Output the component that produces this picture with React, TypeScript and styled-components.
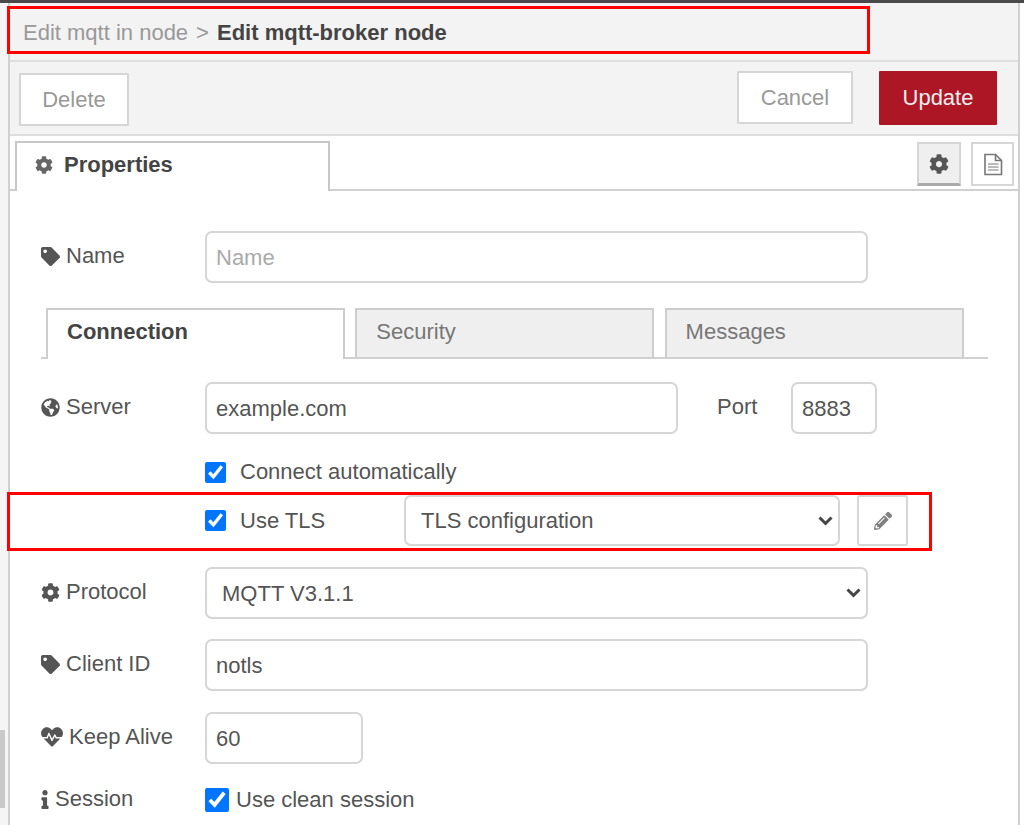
import React, { FC, ReactNode } from "react";
import styled, { createGlobalStyle } from "styled-components";
import { FaCog, FaTag, FaGlobeAmericas, FaHeartbeat, FaInfo, FaPencilAlt } from "react-icons/fa";

const GlobalStyle = createGlobalStyle`
  html, body {
    margin: 0;
    padding: 0;
    background: #fff;
  }
  * {
    box-sizing: border-box;
  }
  body, input, select, button {
    font-family: "Liberation Sans", Arial, sans-serif;
    font-size: 22px;
    color: #555;
  }
`;

const Field: FC<{ icon?: ReactNode; label?: string; children: ReactNode; $top: number }> = ({ icon, label, children, $top }) => (
  <Row $top={$top}>
    <RowLabel>
      {icon}
      {label}
    </RowLabel>
    {children}
  </Row>
);

const Chevron: FC = () => (
  <ArrowIcon viewBox="0 0 15 10">
    <path d="M1.5 1.5 L7.5 7.5 L13.5 1.5" />
  </ArrowIcon>
);

const FileIcon: FC = () => (
  <svg width="20" height="23" viewBox="0 0 20 23" fill="none" stroke="#777" strokeWidth="1.6">
    <path d="M2 1.5 H12.5 L18.5 7.5 V21.5 H2 Z" />
    <path d="M12.5 1.5 V7.5 H18.5" />
    <path d="M5 11 H15.5 M5 14 H15.5 M5 17 H15.5" strokeWidth="1.2" />
  </svg>
);

const App: FC = () => {
  return (
    <Page>
      <GlobalStyle />
      <TopLine />
      <Body>
        <Gutter>
          <GutterThumb />
        </Gutter>
        <Panel>
          <Header>
            <Crumb>Edit mqtt in node</Crumb>
            <CrumbSep>&gt;</CrumbSep>
            <CrumbCurrent>Edit mqtt-broker node</CrumbCurrent>
          </Header>
          <Toolbar>
            <DeleteButton>Delete</DeleteButton>
            <ToolbarRight>
              <CancelButton>Cancel</CancelButton>
              <UpdateButton>Update</UpdateButton>
            </ToolbarRight>
          </Toolbar>
          <TabBar>
            <MainTab>
              <FaCog size={18} color="#666" />
              Properties
            </MainTab>
            <SideButtons>
              <GearButton>
                <FaCog size={20} color="#555" />
              </GearButton>
              <DocButton>
                <FileIcon />
              </DocButton>
            </SideButtons>
          </TabBar>
          <Form>
            <Field $top={40} icon={<FaTag size={19} />} label="Name">
              <TextInput $width={663} placeholder="Name" />
            </Field>
            <SubTabs>
              <SubTab $active>Connection</SubTab>
              <SubTab>Security</SubTab>
              <SubTab>Messages</SubTab>
            </SubTabs>
            <Field $top={23} icon={<FaGlobeAmericas size={19} />} label="Server">
              <TextInput $width={473} defaultValue="example.com" />
              <PortLabel>Port</PortLabel>
              <TextInput $width={86} defaultValue="8883" />
            </Field>
            <CheckRow $top={25}>
              <CheckLine>
                <Check defaultChecked />
                Connect automatically
              </CheckLine>
            </CheckRow>
            <CheckRow $top={10}>
              <TlsCheck>
                <Check defaultChecked />
                Use TLS
              </TlsCheck>
              <SelectWrap $width={436}>
                <Select $height={51} defaultValue="tls">
                  <option value="tls">TLS configuration</option>
                </Select>
                <Chevron />
              </SelectWrap>
              <EditButton>
                <FaPencilAlt size={18} color="#808080" />
              </EditButton>
            </CheckRow>
            <Field $top={21} icon={<FaCog size={19} />} label="Protocol">
              <SelectWrap $width={663}>
                <Select $height={52} defaultValue="v311">
                  <option value="v311">MQTT V3.1.1</option>
                </Select>
                <Chevron />
              </SelectWrap>
            </Field>
            <Field $top={20} icon={<FaTag size={19} />} label="Client ID">
              <TextInput $width={663} defaultValue="notls" />
            </Field>
            <Field $top={21} icon={<FaHeartbeat size={22} />} label="Keep Alive">
              <TextInput $width={158} defaultValue="60" />
            </Field>
            <Field $top={22} icon={<InfoIcon />} label="Session">
              <SessionLine>
                <SessionCheck defaultChecked />
                Use clean session
              </SessionLine>
            </Field>
          </Form>
        </Panel>
      </Body>
      <HeaderHighlight />
      <TlsHighlight />
    </Page>
  );
};

export default App;

const Page = styled.div`
  position: relative;
  width: 1024px;
  height: 825px;
  overflow: hidden;
  display: flex;
  flex-direction: column;
  background: #fff;
`;

const TopLine = styled.div`
  height: 3px;
  flex: none;
  background: #4a4a4a;
`;

const Body = styled.div`
  flex: 1;
  display: flex;
  min-height: 0;
`;

const Gutter = styled.div`
  width: 8px;
  flex: none;
  background: #f5f5f5;
  padding-top: 727px;
`;

const GutterThumb = styled.div`
  width: 5px;
  height: 78px;
  background: #c9c9c9;
`;

const Panel = styled.div`
  width: 1012px;
  flex: none;
  display: flex;
  flex-direction: column;
  border-left: 2px solid #d0d0d0;
  border-right: 2px solid #d0d0d0;
`;

const Header = styled.div`
  height: 59px;
  flex: none;
  display: flex;
  align-items: center;
  padding: 2px 0 0 13px;
  background: #f3f3f3;
  border-bottom: 2px solid #dedede;
`;

const Crumb = styled.span`
  color: #999;
`;

const CrumbSep = styled.span`
  color: #999;
  margin: 0 8px;
`;

const CrumbCurrent = styled.span`
  color: #444;
  font-weight: bold;
`;

const Toolbar = styled.div`
  height: 74px;
  flex: none;
  display: flex;
  justify-content: space-between;
  align-items: flex-start;
  padding: 9px 21px 0 9px;
  background: #f3f3f3;
  border-bottom: 2px solid #dedede;
`;

const ToolbarRight = styled.div`
  display: flex;
  gap: 26px;
`;

const ActionButton = styled.button`
  height: 53px;
  padding: 0;
  background: #fff;
  color: #999;
  border: 2px solid #d6d6d6;
  border-radius: 1px;
`;

const DeleteButton = styled(ActionButton)`
  width: 110px;
  margin-top: 2px;
`;

const CancelButton = styled(ActionButton)`
  width: 116px;
`;

const UpdateButton = styled(ActionButton)`
  width: 118px;
  height: 54px;
  background: #ad1625;
  color: #eee;
  border: none;
`;

const TabBar = styled.div`
  height: 55px;
  flex: none;
  display: flex;
  justify-content: space-between;
  align-items: flex-start;
  padding: 5px 4px 0 5px;
  border-bottom: 2px solid #d0d0d0;
`;

const MainTab = styled.div`
  width: 315px;
  height: 50px;
  display: flex;
  align-items: center;
  gap: 11px;
  padding: 0 0 4px 18px;
  background: #fff;
  color: #444;
  font-weight: bold;
  border: 2px solid #c8c8c8;
  border-bottom: none;
`;

const SideButtons = styled.div`
  display: flex;
  gap: 10px;
  padding-top: 1px;
`;

const GearButton = styled.div`
  width: 44px;
  height: 44px;
  display: flex;
  align-items: center;
  justify-content: center;
  background: #efefef;
  border: 2px solid #d6d6d6;
  border-bottom: 3px solid #aaa;
`;

const DocButton = styled.div`
  width: 43px;
  height: 44px;
  display: flex;
  align-items: center;
  justify-content: center;
  background: #fff;
  border: 2px solid #d6d6d6;
`;

const Form = styled.div`
  display: flex;
  flex-direction: column;
  padding-left: 31px;
`;

const Row = styled.div<{ $top: number }>`
  display: flex;
  align-items: center;
  margin-top: ${(p) => p.$top}px;
`;

const CheckRow = styled(Row)`
  padding-left: 164px;
`;

const RowLabel = styled.div`
  width: 164px;
  flex: none;
  display: flex;
  align-items: center;
  gap: 6px;
  color: #555;
  padding-bottom: 2px;

  svg {
    flex: none;
    color: #555;
  }
`;

const InfoIcon = styled(FaInfo)`
  width: 8px;
  height: 19px;
`;

const TextInput = styled.input<{ $width: number }>`
  width: ${(p) => p.$width}px;
  height: 52px;
  flex: none;
  padding: 2px 9px 0;
  color: #555;
  background: #fff;
  border: 2px solid #d6d6d6;
  border-radius: 7px;
  outline: none;

  &::placeholder {
    color: #aaa;
    opacity: 1;
  }
`;

const PortLabel = styled.span`
  width: 113px;
  flex: none;
  padding: 0 0 2px 39px;
  color: #555;
`;

const SubTabs = styled.div`
  width: 947px;
  height: 51px;
  margin-top: 25px;
  display: flex;
  gap: 10.3px;
  padding-left: 5px;
  border-bottom: 2px solid #d0d0d0;
`;

const SubTab = styled.div<{ $active?: boolean }>`
  width: 299px;
  height: ${(p) => (p.$active ? 51 : 49)}px;
  display: flex;
  align-items: center;
  padding: 0 0 ${(p) => (p.$active ? 5 : 3)}px 19px;
  background: ${(p) => (p.$active ? "#fff" : "#efefef")};
  color: ${(p) => (p.$active ? "#444" : "#777")};
  font-weight: ${(p) => (p.$active ? "bold" : "normal")};
  border: 2px solid #cdcdcd;
  border-bottom: ${(p) => (p.$active ? "none" : "0")};
`;

const CheckLine = styled.label`
  display: flex;
  align-items: center;
  gap: 14px;
  color: #555;
`;

const TlsCheck = styled(CheckLine)`
  width: 199px;
  flex: none;
`;

const SessionLine = styled(CheckLine)`
  gap: 7px;
`;

const Check = styled.input.attrs({ type: "checkbox" })`
  width: 21px;
  height: 21px;
  margin: 0;
  flex: none;
  accent-color: #0075ff;
`;

const SessionCheck = styled(Check)`
  width: 24px;
  height: 24px;
`;

const SelectWrap = styled.div<{ $width: number }>`
  position: relative;
  width: ${(p) => p.$width}px;
  flex: none;
`;

const Select = styled.select<{ $height: number }>`
  display: block;
  width: 100%;
  height: ${(p) => p.$height}px;
  padding: 0 40px 0 15px;
  appearance: none;
  color: #555;
  background: #fff;
  border: 2px solid #d6d6d6;
  border-radius: 7px;
  outline: none;
`;

const ArrowIcon = styled.svg`
  position: absolute;
  right: 7px;
  top: 21px;
  width: 15px;
  height: 10px;
  fill: none;
  stroke: #444;
  stroke-width: 3;
`;

const EditButton = styled.div`
  width: 51px;
  height: 51px;
  flex: none;
  margin-left: 17px;
  display: flex;
  align-items: center;
  justify-content: center;
  background: #fff;
  border: 2px solid #d6d6d6;
  border-radius: 3px;
`;

const HeaderHighlight = styled.div`
  position: absolute;
  left: 7px;
  top: 6px;
  width: 863px;
  height: 48px;
  border: 3px solid #f00;
`;

const TlsHighlight = styled.div`
  position: absolute;
  left: 7px;
  top: 492px;
  width: 925px;
  height: 59px;
  border: 3px solid #f00;
`;
